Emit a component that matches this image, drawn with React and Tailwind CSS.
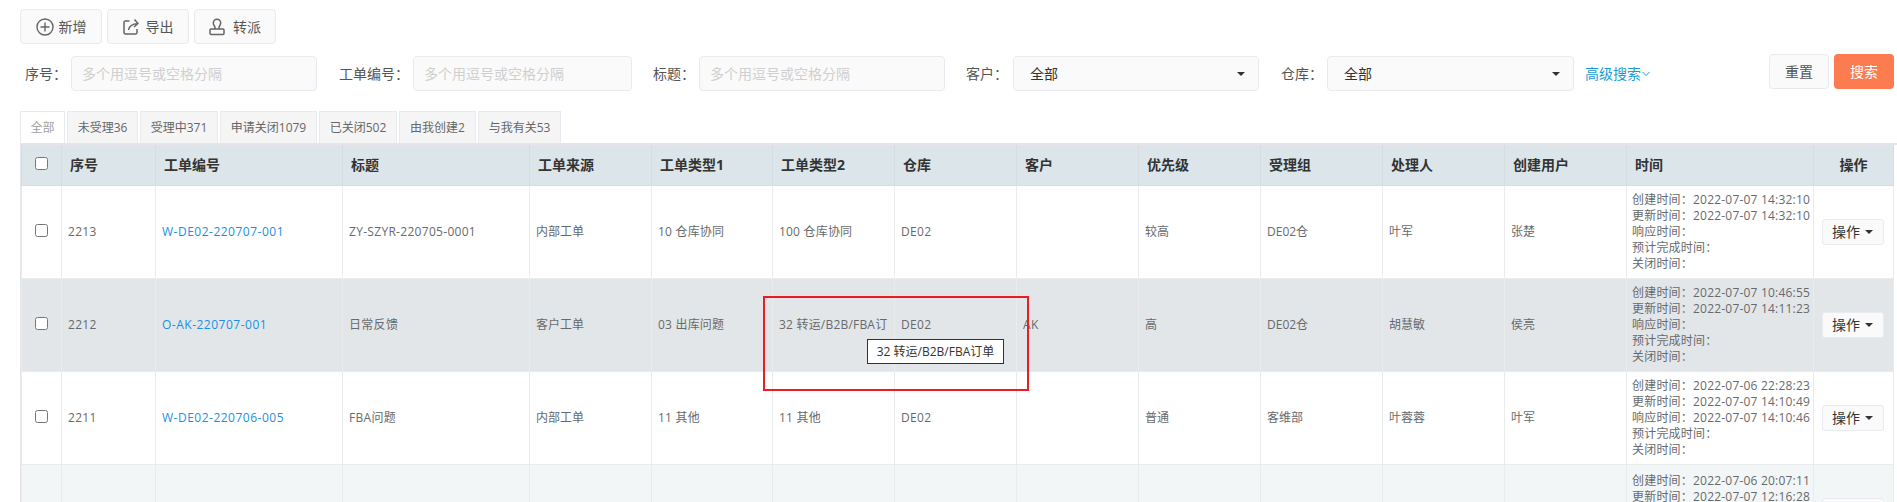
import React from "react";

const cols = [40, 94, 187, 187, 122, 121, 122, 122, 122, 122, 122, 122, 122, 187, 80];
const heads = ["序号", "工单编号", "标题", "工单来源", "工单类型1", "工单类型2", "仓库", "客户", "优先级", "受理组", "处理人", "创建用户", "时间"];
const tabs = [
  ["全部", "w-[45px]"],
  ["未受理36", "w-[71px]"],
  ["受理中371", "w-[78px]"],
  ["申请关闭1079", "w-[97px]"],
  ["已关闭502", "w-[78px]"],
  ["由我创建2", "w-[77px]"],
  ["与我有关53", "w-[83px]"],
];
const rows = [
  {
    bg: "bg-white",
    c: ["2213", "W-DE02-220707-001", "ZY-SZYR-220705-0001", "内部工单", "10 仓库协同", "100 仓库协同", "DE02", "", "较高", "DE02仓", "叶军", "张楚"],
    t: ["2022-07-07 14:32:10", "2022-07-07 14:32:10", "", "", ""],
  },
  {
    bg: "bg-[#e3e6e9]",
    c: ["2212", "O-AK-220707-001", "日常反馈", "客户工单", "03 出库问题", "32 转运/B2B/FBA订单", "DE02", "AK", "高", "DE02仓", "胡慧敏", "侯亮"],
    t: ["2022-07-07 10:46:55", "2022-07-07 14:11:23", "", "", ""],
  },
  {
    bg: "bg-white",
    c: ["2211", "W-DE02-220706-005", "FBA问题", "内部工单", "11 其他", "11 其他", "DE02", "", "普通", "客维部", "叶蓉蓉", "叶军"],
    t: ["2022-07-06 22:28:23", "2022-07-07 14:10:49", "2022-07-07 14:10:46", "", ""],
  },
  {
    bg: "bg-[#f3f6f6]",
    c: ["", "", "", "", "", "", "", "", "", "", "", ""],
    t: ["2022-07-06 20:07:11", "2022-07-07 12:16:28", "", "", ""],
  },
];
const timeLabels = ["创建时间：", "更新时间：", "响应时间：", "预计完成时间：", "关闭时间："];

function Caret() {
  return <span className="inline-block w-0 h-0 border-x-[4px] border-x-transparent border-t-[4px] border-t-[#333]" />;
}

function ToolButton({ icon, label, gap }) {
  return (
    <button className={"w-[82px] h-[35px] flex items-center justify-center bg-[#fafafa] border border-[#e9eaef] rounded-[4px] text-[14px] text-[#555] " + gap}>
      {icon}
      <span>{label}</span>
    </button>
  );
}

function Field({ label, labelW, inputW, gap, select }) {
  return (
    <>
      <label className={"text-[14px] text-[#555] whitespace-nowrap shrink-0 " + labelW}>{label}：</label>
      {select ? (
        <div className={"h-[35px] shrink-0 flex items-center justify-between pl-4 pr-[13px] bg-[#fafafa] border border-[#e9eaef] rounded-[4px] text-[14px] text-[#333] " + inputW}>
          <span>全部</span>
          <Caret />
        </div>
      ) : (
        <input
          readOnly
          placeholder="多个用逗号或空格分隔"
          className={"h-[35px] shrink-0 px-[10px] bg-[#fafafa] border border-[#e9eaef] rounded-[4px] text-[14px] placeholder:text-[#cfcfcf] outline-none " + inputW}
        />
      )}
      <span className={"shrink-0 " + gap} />
    </>
  );
}

function cellTrack(j) {
  if (j === 1) return "text-[#1a8fe3] tracking-[0.5px]";
  if (j === 0 || j === 2 || j === 6 || j === 7) return "tracking-[0.3px]";
  if (j === 4 || j === 5) return "tracking-[0.2px]";
  return "";
}

export default function App() {
  return (
    <div
      className="relative w-[1897px] h-[502px] overflow-hidden bg-white text-[#676a6c]"
      style={{ fontFamily: '"Open Sans","Noto Sans CJK SC",sans-serif' }}
    >
      <div className="pl-5 pt-[9px] flex gap-[5px]">
        <ToolButton
          label="新增"
          gap="gap-[5px]"
          icon={
            <svg width="18" height="18" viewBox="0 0 18 18" fill="none" stroke="#666" strokeWidth="1.4">
              <circle cx="9" cy="9" r="8" />
              <path d="M9 4.500v9M4.500 9h9" />
            </svg>
          }
        />
        <ToolButton
          label="导出"
          gap="gap-[7px]"
          icon={
            <svg width="16" height="18" viewBox="0 0 16 18" fill="none" stroke="#666" strokeWidth="1.5">
              <path d="M6.500 3H2.500A1.500 1.500 0 0 0 1 4.500v10A1.500 1.500 0 0 0 2.500 16h10a1.500 1.500 0 0 0 1.500-1.500V11" />
              <path d="M5.500 12c.5-3.500 3-6 9.500-6.500M11.500 1.500L15 5.500 11 9" />
            </svg>
          }
        />
        <ToolButton
          label="转派"
          gap="gap-[8px]"
          icon={
            <svg width="16" height="18" viewBox="0 0 16 18" fill="none" stroke="#666" strokeWidth="1.5">
              <path d="M6 11V9.500C6 8 4.300 7.300 4.300 5a3.700 3.700 0 0 1 7.400 0c0 2.300-1.700 3-1.700 4.500V11" />
              <rect x="1" y="11" width="14" height="5.500" rx="1" />
            </svg>
          }
        />
      </div>

      <div className="pl-[25px] mt-[12px] flex items-center">
        <Field label="序号" labelW="w-[46px]" inputW="w-[246px]" gap="w-[22px]" />
        <Field label="工单编号" labelW="w-[74px]" inputW="w-[219px]" gap="w-[21px]" />
        <Field label="标题" labelW="w-[46px]" inputW="w-[246px]" gap="w-[21px]" />
        <Field label="客户" labelW="w-[47px]" inputW="w-[246px]" gap="w-[22px]" select />
        <Field label="仓库" labelW="w-[46px]" inputW="w-[247px]" gap="w-[11px]" select />
        <a className="flex items-center gap-[1px] text-[14px] text-[#1a9bd7] whitespace-nowrap">
          高级搜索
          <svg width="8" height="6" viewBox="0 0 8 6" fill="none" stroke="#1a9bd7" strokeWidth="1">
            <path d="M.5 1l3.500 3.500L7.500 1" />
          </svg>
        </a>
        <div className="ml-auto pr-[3px] flex gap-[5px] -mt-[4px]">
          <button className="w-[60px] h-[35px] bg-[#fafafa] border border-[#e9eaef] rounded-[4px] text-[14px] text-[#555]">重置</button>
          <button className="w-[60px] h-[35px] bg-[#fc7c4f] rounded-[4px] text-[14px] text-white">搜索</button>
        </div>
      </div>

      <div className="pl-5 mt-[20px] flex gap-[2px] h-[32px]">
        {tabs.map(([t, w], i) => (
          <div
            key={t}
            className={
              "h-[32px] flex items-center justify-center text-[12px] border border-b-0 border-[#e9eaef] whitespace-nowrap " +
              w +
              (i === 0 ? " bg-white text-[#a0a0a0]" : " bg-[#f5f5f5] text-[#666]")
            }
          >
            {t}
          </div>
        ))}
      </div>

      <div className="ml-5 border-l border-t-2 border-[#e4e4e9]">
        <table className="table-fixed border-collapse w-[1872px] text-[12px]">
          <colgroup>
            {cols.map((w, i) => (
              <col key={i} style={{ width: w }} />
            ))}
          </colgroup>
          <thead>
            <tr className="h-[40px] bg-[#dce6ea]">
              <th className="border-x border-b border-[#d6dde0] text-center align-middle">
                <input type="checkbox" className="w-[13px] h-[13px] align-middle -mt-[4px]" />
              </th>
              {heads.map((h) => (
                <th key={h} className="border-x border-b border-[#d6dde0] pl-2 text-left text-[14px] font-bold text-[#333]">
                  {h}
                </th>
              ))}
              <th className="border-x border-b border-[#d6dde0] text-center text-[14px] font-bold text-[#333]">操作</th>
            </tr>
          </thead>
          <tbody>
            {rows.map((r, i) => (
              <tr key={i} className={"h-[93px] " + r.bg}>
                <td className="border border-[#e9ebed] text-center align-middle">
                  {i < 3 && <input type="checkbox" className="w-[13px] h-[13px] align-middle -mt-[4px]" />}
                </td>
                {r.c.map((v, j) => (
                  <td key={j} className={"border border-[#e9ebed] pl-[6px] pr-[3px] align-middle " + cellTrack(j)}>
                    <div className="h-[18px] leading-[18px] overflow-hidden break-all">{v}</div>
                  </td>
                ))}
                <td className={"border border-[#e9ebed] pl-[5px] " + (i === 3 ? "align-top pt-[8px]" : "align-middle")}>
                  {timeLabels.map((l, k) => (
                    <div key={k} className="h-4 leading-4 whitespace-nowrap tracking-[0.2px]">
                      {l}
                      {r.t[k]}
                    </div>
                  ))}
                </td>
                <td className={"border border-[#e9ebed] text-center " + (i === 3 ? "align-top pt-[33px]" : "align-middle")}>
                  <button className="inline-flex items-center justify-center gap-[5px] w-[62px] h-[26px] mr-[2px] bg-[#fafafa] border border-[#e9ebf0] rounded-[3px] text-[14px] text-[#333]">
                    操作
                    <Caret />
                  </button>
                </td>
              </tr>
            ))}
          </tbody>
        </table>
      </div>

      <div className="absolute left-[867px] top-[339px] w-[137px] h-[25px] flex items-center justify-center bg-white border border-[#333] text-[12px] text-[#333] whitespace-nowrap">
        32 转运/B2B/FBA订单
      </div>
      <div className="absolute left-[763px] top-[296px] w-[266px] h-[95px] border-2 border-[#ed1c24] pointer-events-none" />
    </div>
  );
}
